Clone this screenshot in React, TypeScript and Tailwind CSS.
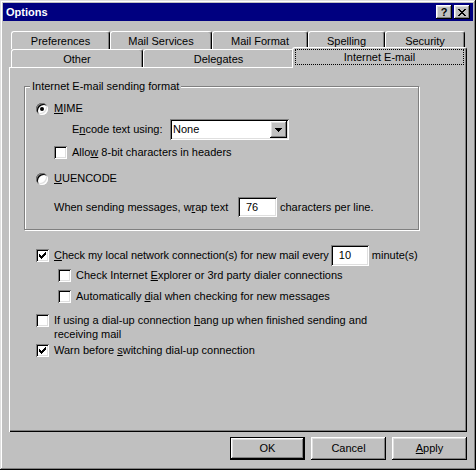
import type { ReactNode } from "react"

// classic 3D bevels
const raised = "bg-[#c0c0c0] shadow-[inset_-1px_-1px_#000,inset_1px_1px_#fff,inset_-2px_-2px_#808080,inset_2px_2px_#dfdfdf]"
const sunken = "bg-white shadow-[inset_1px_1px_#808080,inset_-1px_-1px_#fff,inset_2px_2px_#000,inset_-2px_-2px_#dfdfdf]"

function Check({ checked }: { checked?: boolean }) {
    return (
        <div className={`w-[13px] h-[13px] shrink-0 ${sunken}`}>
            {checked && (
                <svg width="13" height="13" shapeRendering="crispEdges">
                    {[5, 6, 7, 6, 5, 4, 3].map((y, i) => (
                        <rect key={i} x={3 + i} y={y} width="1" height="3" fill="#000" />
                    ))}
                </svg>
            )}
        </div>
    )
}

function Radio({ checked }: { checked?: boolean }) {
    return (
        <div className="w-[12px] h-[12px] shrink-0 rounded-full bg-white flex items-center justify-center shadow-[inset_1px_1px_#808080,inset_-1px_-1px_#fff,inset_2px_2px_#000,inset_-2px_-2px_#dfdfdf]">
            {checked && <div className="w-[4px] h-[4px] rounded-full bg-black" />}
        </div>
    )
}

function Tab({ className, children }: { className: string; children: ReactNode }) {
    return (
        <div
            className={`h-[18px] pt-[1px] flex items-center justify-center border-l border-t border-r border-white border-r-black rounded-t-[3px] shadow-[inset_-1px_0_#808080] ${className}`}
        >
            {children}
        </div>
    )
}

function Button({ children, primary }: { children: ReactNode; primary?: boolean }) {
    return (
        <button
            className={`w-[75px] h-[23px] flex items-center justify-center ${raised} ${primary ? "border border-black" : ""}`}
        >
            {children}
        </button>
    )
}

export default function App() {
    return (
        <div className="w-[476px] h-[470px] p-[3px] bg-[#c0c0c0] text-[11px] leading-[13px] text-black font-['Liberation_Sans',Arial,sans-serif] select-none shadow-[inset_-1px_-1px_#000,inset_1px_1px_#dfdfdf,inset_-2px_-2px_#808080,inset_2px_2px_#fff]">
            {/* Title bar */}
            <div className="h-[18px] bg-[#000080] flex items-center px-[3px]">
                <span className="font-bold text-white">Options</span>
                <div className="ml-auto flex gap-[2px]">
                    <button className={`w-[16px] h-[14px] flex items-center justify-center font-bold text-[11px] leading-none ${raised}`}>
                        ?
                    </button>
                    <button className={`w-[16px] h-[14px] flex items-center justify-center ${raised}`}>
                        <svg width="8" height="7" shapeRendering="crispEdges">
                            {[0, 1, 2, 3, 4, 5, 6].map((i) => (
                                <g key={i}>
                                    <rect x={i} y={i} width="2" height="1" fill="#000" />
                                    <rect x={6 - i} y={i} width="2" height="1" fill="#000" />
                                </g>
                            ))}
                        </svg>
                    </button>
                </div>
            </div>

            <div className="ml-[6px] mt-[10px] w-[458px]">
                {/* Tabs */}
                <div className="flex pl-[2px] h-[18px]">
                    <Tab className="w-[99px]">Preferences</Tab>
                    <Tab className="w-[102px]">Mail Services</Tab>
                    <Tab className="w-[96px]">Mail Format</Tab>
                    <Tab className="w-[77px]">Spelling</Tab>
                    <Tab className="w-[80px]">Security</Tab>
                </div>
                <div className="flex pl-[2px] h-[18px]">
                    <Tab className="w-[132px]">Other</Tab>
                    <Tab className="w-[151px]">Delegates</Tab>
                    <div className="relative z-10 self-start -mt-[2px] -mx-[2px] w-[175px] h-[21px] bg-[#c0c0c0] border-l border-t border-r border-white border-r-black rounded-t-[3px] shadow-[inset_-1px_0_#808080]">
                        <div className="mt-[1px] mx-[2px] h-[16px] border border-dotted border-black flex items-center justify-center">
                            Internet E-mail
                        </div>
                    </div>
                </div>

                {/* Panel */}
                <div className="w-[458px] h-[365px] pt-[19px] pl-[15px] shadow-[inset_1px_1px_#fff,inset_-1px_-1px_#000,inset_-2px_-2px_#808080]">
                    <div className="relative w-[395px] h-[144px] border border-[#808080] pl-[11px] shadow-[1px_1px_#fff,inset_1px_1px_#fff]">
                        <span className="absolute left-[5px] -top-[7px] px-[2px] bg-[#c0c0c0]">
                            Internet E-mail sending format
                        </span>

                        <div className="mt-[15px] h-[13px] flex items-center gap-[6px]">
                            <Radio checked />
                            <span><u>M</u>IME</span>
                        </div>
                        <div className="mt-[4px] h-[21px] flex items-center pl-[36px]">
                            <span className="w-[98px] whitespace-nowrap">E<u>n</u>code text using:</span>
                            <div className={`w-[119px] h-[21px] p-[2px] flex items-center ${sunken}`}>
                                <span className="flex-1 pl-[1px]">None</span>
                                <div className={`w-[17px] h-[17px] flex items-center justify-center ${raised}`}>
                                    <svg width="7" height="4" shapeRendering="crispEdges">
                                        <rect x="0" y="0" width="7" height="1" fill="#000" />
                                        <rect x="1" y="1" width="5" height="1" fill="#000" />
                                        <rect x="2" y="2" width="3" height="1" fill="#000" />
                                        <rect x="3" y="3" width="1" height="1" fill="#000" />
                                    </svg>
                                </div>
                            </div>
                        </div>
                        <div className="mt-[6px] h-[13px] flex items-center gap-[5px] pl-[18px]">
                            <Check />
                            <span>Allo<u>w</u> 8-bit characters in headers</span>
                        </div>
                        <div className="mt-[13px] h-[13px] flex items-center gap-[6px]">
                            <Radio />
                            <span><u>U</u>UENCODE</span>
                        </div>
                        <div className="mt-[12px] h-[20px] flex items-center pl-[18px]">
                            <span className="w-[184px] whitespace-nowrap">When sending messages, w<u>r</u>ap text</span>
                            <div className={`w-[39px] h-[20px] pl-[8px] flex items-center ${sunken}`}>76</div>
                            <span className="ml-[3px]">characters per line.</span>
                        </div>
                    </div>

                    <div className="mt-[15px] h-[21px] flex items-center pl-[12px]">
                        <Check checked />
                        <span className="ml-[5px] mr-[2px] whitespace-nowrap tracking-[-0.05px]">
                            <u>C</u>heck my local network connection(s) for new mail every
                        </span>
                        <div className={`w-[38px] h-[21px] pl-[8px] shrink-0 flex items-center ${sunken}`}>10</div>
                        <span className="ml-[3px]">minute(s)</span>
                    </div>
                    <div className="mt-[3px] h-[13px] flex items-center gap-[5px] pl-[34px]">
                        <Check />
                        <span>Check Internet <u>E</u>xplorer or 3rd party dialer connections</span>
                    </div>
                    <div className="mt-[8px] h-[13px] flex items-center gap-[5px] pl-[34px]">
                        <Check />
                        <span>Automatically <u>d</u>ial when checking for new messages</span>
                    </div>
                    <div className="mt-[10px] flex items-start gap-[5px] pl-[12px]">
                        <div className="mt-[1px]">
                            <Check />
                        </div>
                        <span className="leading-[14px]">
                            If using a dial-up connection <u>h</u>ang up when finished sending and
                            <br />
                            receiving mail
                        </span>
                    </div>
                    <div className="mt-[3px] h-[13px] flex items-center gap-[5px] pl-[12px]">
                        <Check checked />
                        <span>Warn before <u>s</u>witching dial-up connection</span>
                    </div>
                </div>

                {/* Buttons */}
                <div className="mt-[5px] flex justify-end gap-[6px]">
                    <Button primary>OK</Button>
                    <Button>Cancel</Button>
                    <Button><span><u>A</u>pply</span></Button>
                </div>
            </div>
        </div>
    )
}
